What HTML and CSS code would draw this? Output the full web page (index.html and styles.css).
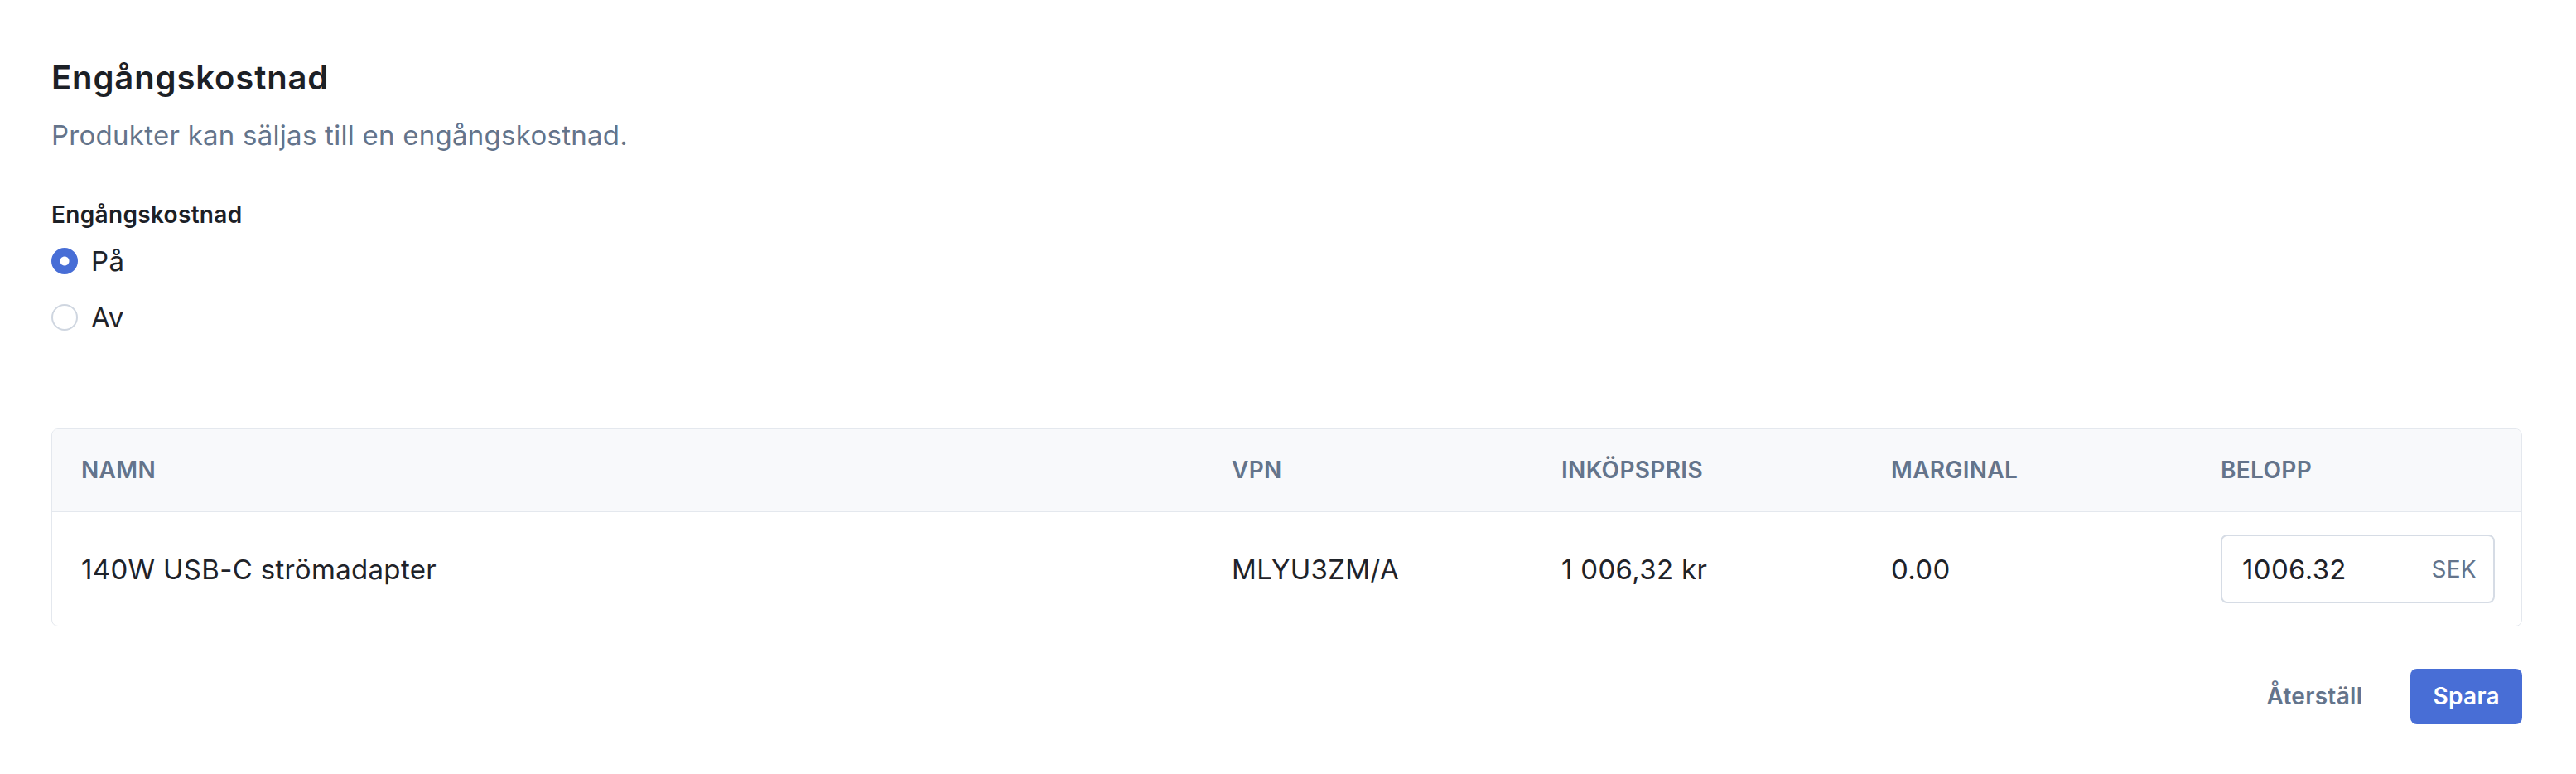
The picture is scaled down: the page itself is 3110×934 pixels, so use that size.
FILE: index.html
```html
<!DOCTYPE html>
<html lang="sv">
<head>
    <meta charset="UTF-8">
    <meta name="viewport" content="width=device-width, initial-scale=1" />
    <title>Engångskostnad</title>
    <link rel="stylesheet" href="styles.css">
</head>
<body>
    <div class="page">
        <h2 class="title">Engångskostnad</h2>
        <p class="lead">Produkter kan säljas till en engångskostnad.</p>

        <div class="field">
            <div class="field-label">Engångskostnad</div>
            <div class="radio-list">
                <label class="radio">
                    <input type="radio" name="onetime" value="on" checked>
                    <span>På</span>
                </label>
                <label class="radio">
                    <input type="radio" name="onetime" value="off">
                    <span>Av</span>
                </label>
            </div>
        </div>

        <div class="table-wrap">
            <table class="products">
                <colgroup>
                    <col>
                    <col class="col-fixed">
                    <col class="col-fixed">
                    <col class="col-fixed">
                    <col class="col-fixed">
                </colgroup>
                <thead>
                    <tr>
                        <th>Namn</th>
                        <th>VPN</th>
                        <th>Inköpspris</th>
                        <th>Marginal</th>
                        <th>Belopp</th>
                    </tr>
                </thead>
                <tbody>
                    <tr>
                        <td>140W USB-C strömadapter</td>
                        <td>MLYU3ZM/A</td>
                        <td>1 006,32 kr</td>
                        <td>0.00</td>
                        <td>
                            <div class="amount">
                                <input type="text" value="1006.32">
                                <span class="currency">SEK</span>
                            </div>
                        </td>
                    </tr>
                </tbody>
            </table>
        </div>

        <div class="actions">
            <button class="btn btn-link">Återställ</button>
            <button class="btn btn-primary">Spara</button>
        </div>
    </div>
</body>
</html>
```

FILE: styles.css
```css
body {
    font-family: Inter, "Noto Sans", sans-serif;
    letter-spacing: 0.02em;
    background-color: #ffffff;
    color: #1f2329;
    margin: 0;
}
.page {
    padding: 66px 65px 40px 62px;
}
.title {
    margin: 0;
    font-size: 40px;
    line-height: 56px;
    font-weight: 600;
    letter-spacing: 0.022em;
    color: #1c2026;
}
.lead {
    margin: 17px 0 0;
    font-size: 33px;
    line-height: 48px;
    letter-spacing: 0.008em;
    color: #64748b;
}
.field {
    margin-top: 52px;
}
.field-label {
    font-size: 28px;
    line-height: 40px;
    font-weight: 600;
    color: #1c2026;
}
.radio-list {
    display: flex;
    flex-direction: column;
    gap: 20px;
    margin-top: 12px;
}
.radio {
    display: flex;
    align-items: center;
    gap: 16px;
    font-size: 33px;
    line-height: 48px;
    color: #1f2329;
}
.radio input {
    appearance: none;
    -webkit-appearance: none;
    margin: 0;
    width: 32px;
    height: 32px;
    border-radius: 50%;
    border: 2px solid #cfd6e0;
    background-color: #ffffff;
}
.radio input:checked {
    border-color: #486ed6;
    background: radial-gradient(circle at center, #ffffff 0 5px, #486ed6 6px);
}
.table-wrap {
    margin-top: 110px;
    border: 1px solid #e4e8ee;
    border-radius: 8px;
    overflow: hidden;
}
.products {
    width: 100%;
    border-collapse: collapse;
    table-layout: fixed;
}
.col-fixed {
    width: 398px;
}
.products th {
    background-color: #f8f9fb;
    text-align: left;
    text-transform: uppercase;
    font-size: 28px;
    line-height: 40px;
    font-weight: 600;
    color: #64748b;
    padding: 29px 32px 30px 35px;
    border-bottom: 1px solid #e4e8ee;
}
.products td {
    font-size: 33px;
    line-height: 48px;
    color: #1f2329;
    padding: 27px 32px 27px 35px;
    vertical-align: middle;
}
.amount {
    display: flex;
    align-items: center;
    height: 83px;
    box-sizing: border-box;
    border: 2px solid #d6dce5;
    border-radius: 8px;
    padding: 0 20px 0 24px;
}
.amount input {
    flex: 1;
    min-width: 0;
    border: none;
    outline: none;
    padding: 0;
    font-family: inherit;
    font-size: 33px;
    letter-spacing: inherit;
    color: #1f2329;
    background: transparent;
}
.currency {
    font-size: 28px;
    color: #64748b;
}
.actions {
    display: flex;
    justify-content: flex-end;
    align-items: center;
    gap: 58px;
    margin-top: 51px;
}
.btn {
    font-family: inherit;
    font-size: 28px;
    line-height: 40px;
    font-weight: 600;
    letter-spacing: inherit;
    border: none;
    border-radius: 8px;
    padding: 13px 27px 14px;
    cursor: pointer;
}
.btn-link {
    background: none;
    color: #64748b;
    padding: 13px 0 14px;
}
.btn-primary {
    background-color: #486ed6;
    color: #ffffff;
}
```
